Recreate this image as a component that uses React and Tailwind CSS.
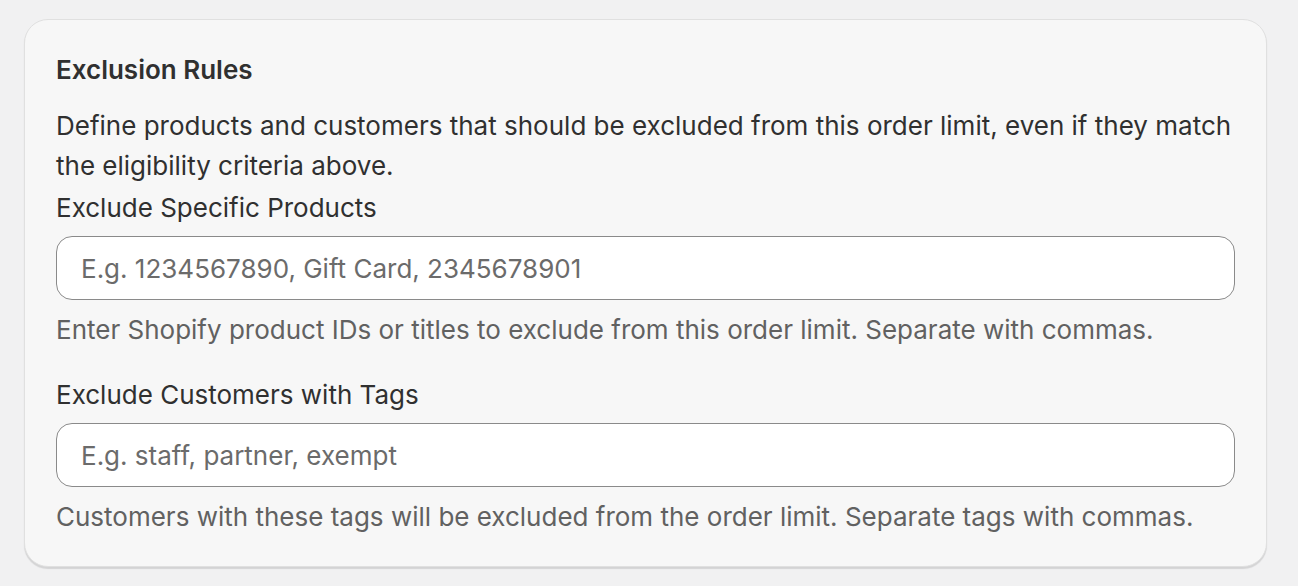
export default function App() {
  return (
    <div className="min-h-[586px] bg-[#f1f1f2] pt-[19px] pl-[24px] font-['Inter',sans-serif] text-[26px] leading-[40px] text-[#303030]">
      <div className="w-[1243px] rounded-[24px] border border-[#e0e0e0] bg-[#f7f7f7] px-[31px] pt-[30px] pb-[29px] shadow-[0_2px_1px_rgba(0,0,0,0.12)]">
        <h2 className="font-semibold">Exclusion Rules</h2>
        <p className="mt-[16px] mr-[-12px]">
          Define products and customers that should be excluded from this order limit, even if they match the
          eligibility criteria above.
        </p>

        <div className="mt-[2px]">
          <label className="block">Exclude Specific Products</label>
          <input
            type="text"
            placeholder="E.g. 1234567890, Gift Card, 2345678901"
            className="mt-[8px] block h-[64px] w-full rounded-[16px] border border-[#8a8a8a] bg-white px-[24px] text-[26px] outline-none placeholder:text-[#6b6b6b]"
          />
          <p className="mt-[10px] text-[#616161]">
            Enter Shopify product IDs or titles to exclude from this order limit. Separate with commas.
          </p>
        </div>

        <div className="mt-[25px]">
          <label className="block">Exclude Customers with Tags</label>
          <input
            type="text"
            placeholder="E.g. staff, partner, exempt"
            className="mt-[8px] block h-[64px] w-full rounded-[16px] border border-[#8a8a8a] bg-white px-[24px] text-[26px] outline-none placeholder:text-[#6b6b6b]"
          />
          <p className="mt-[10px] text-[#616161]">
            Customers with these tags will be excluded from the order limit. Separate tags with commas.
          </p>
        </div>
      </div>
    </div>
  );
}
